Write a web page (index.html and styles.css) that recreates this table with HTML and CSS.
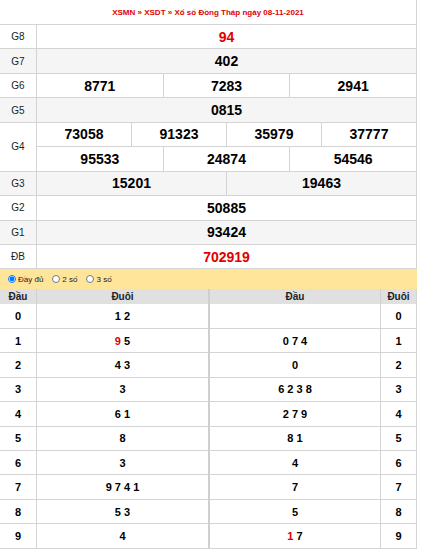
FILE: index.html
```html
<!DOCTYPE html>
<html lang="vi">
<head>
<meta charset="utf-8">
<title>XSDT</title>
<link rel="stylesheet" href="styles.css">
</head>
<body>
<div class="kq">
  <div class="title">XSMN » XSDT » Xổ số Đồng Tháp ngày 08-11-2021</div>

  <div class="lbl">G8</div>
  <div class="v s12 red">94</div>

  <div class="lbl alt">G7</div>
  <div class="v s12 alt">402</div>

  <div class="lbl">G6</div>
  <div class="v s4">8771</div>
  <div class="v s4">7283</div>
  <div class="v s4">2941</div>

  <div class="lbl alt">G5</div>
  <div class="v s12 alt">0815</div>

  <div class="lbl r2">G4</div>
  <div class="v s3">73058</div>
  <div class="v s3">91323</div>
  <div class="v s3">35979</div>
  <div class="v s3">37777</div>
  <div class="v s4">95533</div>
  <div class="v s4">24874</div>
  <div class="v s4">54546</div>

  <div class="lbl alt">G3</div>
  <div class="v s6 alt">15201</div>
  <div class="v s6 alt">19463</div>

  <div class="lbl">G2</div>
  <div class="v s12">50885</div>

  <div class="lbl alt">G1</div>
  <div class="v s12 alt">93424</div>

  <div class="lbl">ĐB</div>
  <div class="v s12 red">702919</div>
</div>

<div class="opts">
  <label class="opt"><input type="radio" name="n" checked>Đầy đủ</label>
  <label class="opt"><input type="radio" name="n">2 số</label>
  <label class="opt"><input type="radio" name="n">3 số</label>
</div>

<div class="loto">
  <div class="h">Đầu</div><div class="h b1">Đuôi</div><div class="h b2">Đầu</div><div class="h b1">Đuôi</div>

  <div class="c">0</div><div class="c b1">1 2</div><div class="c b2"></div><div class="c b1">0</div>
  <div class="c">1</div><div class="c b1"><span><span class="rd">9</span> 5</span></div><div class="c b2">0 7 4</div><div class="c b1">1</div>
  <div class="c">2</div><div class="c b1">4 3</div><div class="c b2">0</div><div class="c b1">2</div>
  <div class="c">3</div><div class="c b1">3</div><div class="c b2">6 2 3 8</div><div class="c b1">3</div>
  <div class="c">4</div><div class="c b1">6 1</div><div class="c b2">2 7 9</div><div class="c b1">4</div>
  <div class="c">5</div><div class="c b1">8</div><div class="c b2">8 1</div><div class="c b1">5</div>
  <div class="c">6</div><div class="c b1">3</div><div class="c b2">4</div><div class="c b1">6</div>
  <div class="c">7</div><div class="c b1">9 7 4 1</div><div class="c b2">7</div><div class="c b1">7</div>
  <div class="c">8</div><div class="c b1">5 3</div><div class="c b2">5</div><div class="c b1">8</div>
  <div class="c">9</div><div class="c b1">4</div><div class="c b2"><span><span class="rd">1</span> 7</span></div><div class="c b1">9</div>
</div>
</body>
</html>
```

FILE: styles.css
```css
* { box-sizing: border-box; }

body {
  margin: 0;
  font-family: "Liberation Sans", Arial, sans-serif;
  color: #000;
  background: #fff;
}

.kq {
  width: 417px;
  display: grid;
  grid-template-columns: 36px repeat(12, 1fr);
  grid-template-rows: 25px repeat(10, 24.45px);
  border-right: 1px solid #d4d4d4;
}

.title {
  grid-column: 1 / -1;
  display: flex;
  align-items: center;
  justify-content: center;
  font-size: 8px;
  font-weight: bold;
  color: #e00000;
  border-bottom: 1px solid #d4d4d4;
}

.lbl {
  display: flex;
  align-items: center;
  justify-content: center;
  font-size: 10px;
  color: #222;
  border-bottom: 1px solid #d4d4d4;
}

.r2 { grid-row: span 2; }

.v {
  display: flex;
  align-items: center;
  justify-content: center;
  font-size: 14px;
  font-weight: bold;
  border-left: 1px solid #d4d4d4;
  border-bottom: 1px solid #d4d4d4;
}

.s12 { grid-column: span 12; }
.s6 { grid-column: span 6; }
.s4 { grid-column: span 4; }
.s3 { grid-column: span 3; }

.alt { background: #f5f5f5; }
.red { color: #e00000; }

.opts {
  width: 417px;
  height: 20px;
  background: #ffe599;
  display: flex;
  align-items: center;
  padding-left: 8px;
  font-size: 8px;
  color: #222;
}

.opt {
  display: flex;
  align-items: center;
  margin-right: 9px;
}

.opt input {
  width: 8px;
  height: 8px;
  margin: 0 2px 0 0;
}

.loto {
  width: 417px;
  display: grid;
  grid-template-columns: 36px 172px 172px 36px;
  grid-template-rows: 15px repeat(10, 24.45px);
  border-right: 1px solid #d4d4d4;
}

.h {
  background: #e0e0e0;
  display: flex;
  align-items: center;
  justify-content: center;
  font-size: 10px;
  font-weight: bold;
  color: #222;
}

.c {
  display: flex;
  align-items: center;
  justify-content: center;
  font-size: 11px;
  font-weight: bold;
  border-bottom: 1px solid #d4d4d4;
}

.b1 { border-left: 1px solid #d4d4d4; }
.b2 { border-left: 2px solid #cfcfcf; }
.h.b1 { border-left-color: #d0d0d0; }

.rd { color: #e00000; }
```
